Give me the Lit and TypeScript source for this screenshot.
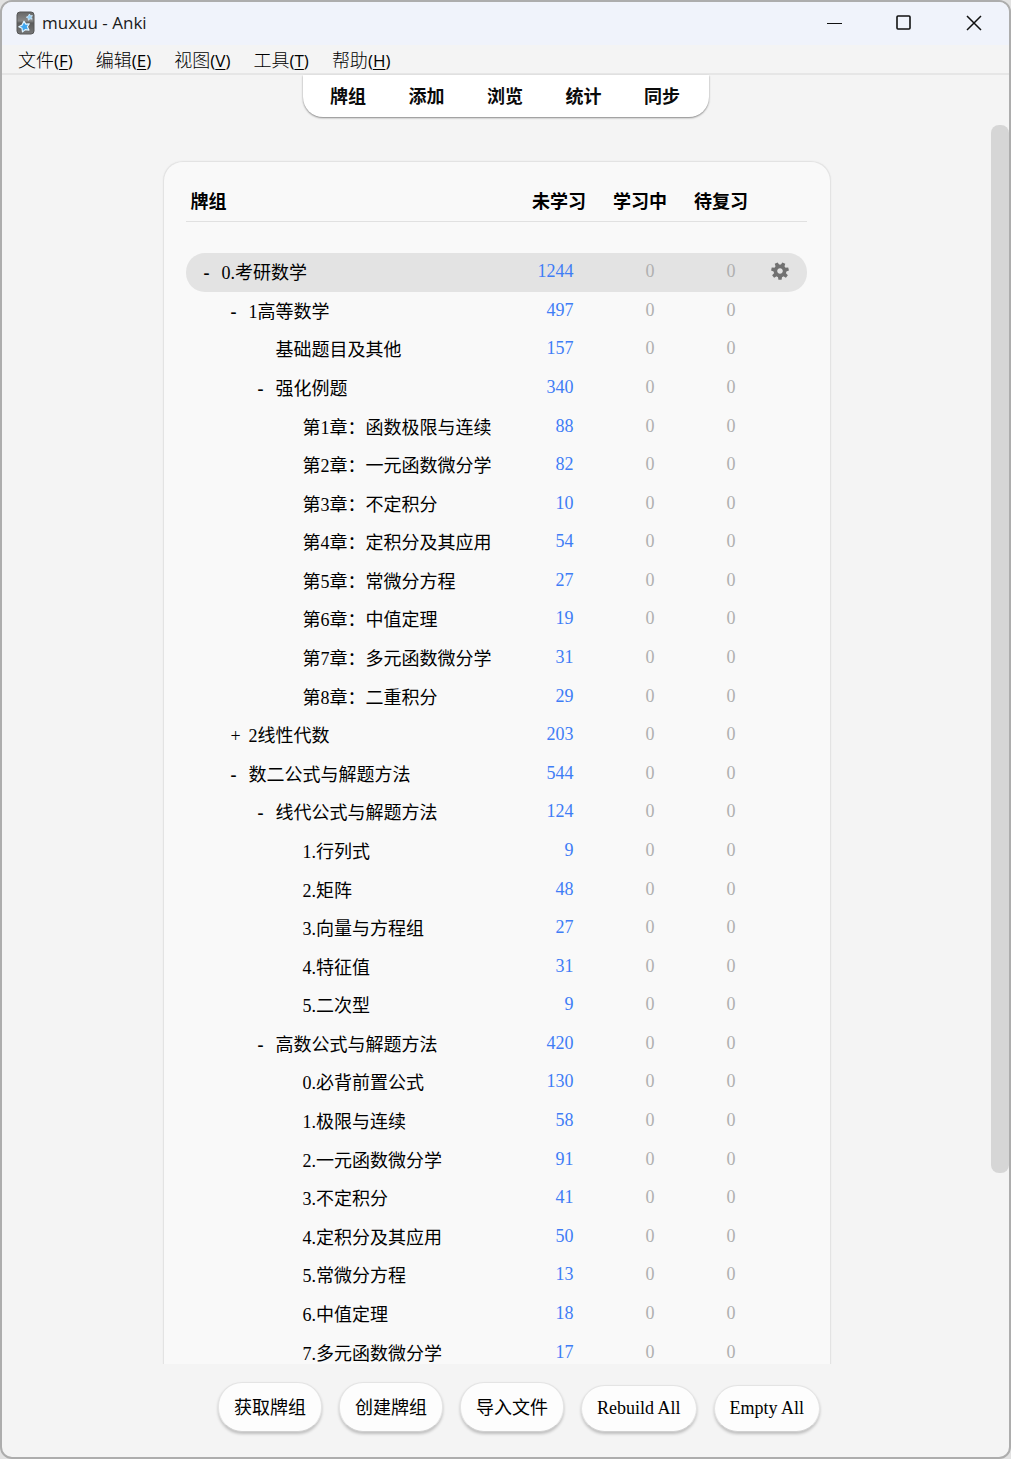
import { LitElement, html, svg, css, nothing } from "lit";
import { customElement, property, state } from "lit/decorators.js";
import { classMap } from "lit/directives/class-map.js";

interface Deck {
  level: number;
  name: string;
  fresh: number;
  toggle?: "-" | "+";
}

const DECKS: Deck[] = [
  { level: 0, name: "0.考研数学", fresh: 1244, toggle: "-" },
  { level: 1, name: "1高等数学", fresh: 497, toggle: "-" },
  { level: 2, name: "基础题目及其他", fresh: 157 },
  { level: 2, name: "强化例题", fresh: 340, toggle: "-" },
  { level: 3, name: "第1章：函数极限与连续", fresh: 88 },
  { level: 3, name: "第2章：一元函数微分学", fresh: 82 },
  { level: 3, name: "第3章：不定积分", fresh: 10 },
  { level: 3, name: "第4章：定积分及其应用", fresh: 54 },
  { level: 3, name: "第5章：常微分方程", fresh: 27 },
  { level: 3, name: "第6章：中值定理", fresh: 19 },
  { level: 3, name: "第7章：多元函数微分学", fresh: 31 },
  { level: 3, name: "第8章：二重积分", fresh: 29 },
  { level: 1, name: "2线性代数", fresh: 203, toggle: "+" },
  { level: 1, name: "数二公式与解题方法", fresh: 544, toggle: "-" },
  { level: 2, name: "线代公式与解题方法", fresh: 124, toggle: "-" },
  { level: 3, name: "1.行列式", fresh: 9 },
  { level: 3, name: "2.矩阵", fresh: 48 },
  { level: 3, name: "3.向量与方程组", fresh: 27 },
  { level: 3, name: "4.特征值", fresh: 31 },
  { level: 3, name: "5.二次型", fresh: 9 },
  { level: 2, name: "高数公式与解题方法", fresh: 420, toggle: "-" },
  { level: 3, name: "0.必背前置公式", fresh: 130 },
  { level: 3, name: "1.极限与连续", fresh: 58 },
  { level: 3, name: "2.一元函数微分学", fresh: 91 },
  { level: 3, name: "3.不定积分", fresh: 41 },
  { level: 3, name: "4.定积分及其应用", fresh: 50 },
  { level: 3, name: "5.常微分方程", fresh: 13 },
  { level: 3, name: "6.中值定理", fresh: 18 },
  { level: 3, name: "7.多元函数微分学", fresh: 17 },
];

const TEETH = [0, 1, 2, 3, 4, 5, 6];

@customElement("title-bar")
class TitleBar extends LitElement {
  static styles = css`
    :host {
      display: flex;
      align-items: center;
      height: 41px;
      padding-bottom: 2px;
      background: #f0f3fb;
      font: 17px/24px "Open Sans", "Noto Sans", sans-serif;
      color: #1a1a1a;
    }
    .logo {
      margin-left: 14px;
      margin-right: 7px;
      flex: none;
    }
    .title {
      flex: 1;
    }
    button {
      width: 70px;
      height: 41px;
      padding: 0;
      border: 0;
      background: none;
      display: grid;
      place-items: center;
    }
    button svg {
      fill: none;
      stroke: #111;
    }
  `;
  render() {
    return html`
      <svg class="logo" width="19" height="24" viewBox="0 0 19 24" aria-hidden="true">
        <defs>
          <linearGradient id="g" x1="0" y1="0" x2="0" y2="1">
            <stop offset="0" stop-color="#666" />
            <stop offset="0.4" stop-color="#888" />
            <stop offset="0.5" stop-color="#5c5c5c" />
            <stop offset="1" stop-color="#777" />
          </linearGradient>
        </defs>
        <rect x="1" y="1" width="17" height="22" rx="3" fill="url(#g)" stroke="#565656" />
        <path
          d="M8 10.2l1.8 2.9 3.5-.3-1.9 3 1.5 3.3-3.6-.5-2.8 2.3-.5-3.6-3.2-1.6 3.3-1.6z"
          fill="#3fa6f0" stroke="#e2f4ff" stroke-width="1.2" stroke-linejoin="round" />
        <path
          d="M13.4 3l1 1.7 2-.1-1.2 1.7.9 1.9-2.1-.4-1.6 1.4-.2-2.1-1.9-.9 2-.9z"
          fill="#8fd0fb" stroke="#d4eeff" stroke-width=".8" stroke-linejoin="round" />
      </svg>
      <span class="title">muxuu - Anki</span>
      <button aria-label="最小化">
        <svg width="16" height="16"><path d="M1 8.5h15" /></svg>
      </button>
      <button aria-label="最大化">
        <svg width="16" height="16"><rect x="1" y="1" width="13" height="13" rx="1" stroke-width="1.6" /></svg>
      </button>
      <button aria-label="关闭">
        <svg width="16" height="16"><path d="M1 1l14 14M15 1L1 15" stroke-width="1.5" /></svg>
      </button>
    `;
  }
}

@customElement("menu-bar")
class MenuBar extends LitElement {
  static styles = css`
    :host {
      display: flex;
      gap: 23px;
      height: 28px;
      padding: 0 16px;
      border-bottom: 2px solid #e6e6e6;
      font: 300 18px/30px "Open Sans", "Noto Sans CJK SC", sans-serif;
    }
    button {
      padding: 0;
      border: 0;
      background: none;
      font: inherit;
      color: #000;
      white-space: nowrap;
    }
    .latin {
      font-size: 17px;
      font-weight: 400;
    }
    u {
      text-underline-offset: 2px;
    }
  `;
  render() {
    return [
      ["文件", "F"],
      ["编辑", "E"],
      ["视图", "V"],
      ["工具", "T"],
      ["帮助", "H"],
    ].map(
      ([label, key]) =>
        html`<button>${label}<span class="latin">(<u>${key}</u>)</span></button>`
    );
  }
}

@customElement("top-nav")
class TopNav extends LitElement {
  static styles = css`
    nav {
      box-sizing: border-box;
      min-width: 406px;
      display: flex;
      justify-content: space-between;
      padding: 2px 29px 0 27px;
      border-radius: 0 0 20px 20px;
      background: #fff;
      box-shadow: 0 1px 2px rgba(0, 0, 0, 0.45);
      font: 700 18px/40px "Liberation Serif", "Noto Sans CJK SC", sans-serif;
    }
    a {
      color: #0a0a0a;
      text-decoration: none;
    }
  `;
  render() {
    return html`<nav>
      ${["牌组", "添加", "浏览", "统计", "同步"].map((t) => html`<a href="#">${t}</a>`)}
    </nav>`;
  }
}

@customElement("deck-table")
class DeckTable extends LitElement {
  @property({ attribute: false }) decks: Deck[] = [];
  @state() private current = 0;

  static styles = css`
    :host {
      display: block;
      height: 100%;
    }
    table {
      width: 100%;
      height: 100%;
      border-spacing: 0;
      table-layout: fixed;
      font: 18px/22px "Liberation Serif", "Noto Sans CJK SC", serif;
    }
    .count {
      width: 81px;
    }
    .options {
      width: 45px;
    }
    th,
    td {
      padding: 0;
    }
    thead tr {
      height: 38px;
    }
    th {
      padding-bottom: 2px;
      border-bottom: 1px solid #e1e1e1;
      font-weight: 700;
      text-align: center;
    }
    th.name {
      padding-left: 5px;
      text-align: left;
    }
    .spacer {
      height: 31px;
    }
    .line {
      display: flex;
      padding-left: 18px;
      padding-top: 2px;
      font-weight: 400;
    }
    .indent {
      flex: none;
    }
    .toggle {
      flex: none;
      width: 18px;
      padding: 0;
      border: 0;
      background: none;
      font: inherit;
      color: #000;
      text-align: left;
    }
    .collapse {
      font-weight: 700;
    }
    a {
      color: #000;
      text-decoration: none;
      white-space: nowrap;
    }
    .num {
      padding-right: 26px;
      padding-bottom: 2px;
      text-align: right;
      color: #b0b0b0;
    }
    .new {
      color: #3f7df6;
    }
    .current td {
      background: #e3e3e3;
    }
    .current td:first-child {
      border-radius: 19px 0 0 19px;
    }
    .current td:last-child {
      border-radius: 0 19px 19px 0;
    }
    .gear {
      display: block;
      margin-left: 9px;
      margin-bottom: 2px;
      padding: 0;
      border: 0;
      background: none;
      color: #717171;
      line-height: 0;
    }
  `;

  private gear() {
    return html`<button class="gear" aria-label="选项">
      <svg width="18" height="18" viewBox="-9 -9 18 18" fill="currentColor">
        <circle r="4.6" fill="none" stroke="currentColor" stroke-width="3.6" />
        ${TEETH.map(
          (i) => svg`<path d="M-2.1 5.4L-1.6 8.8H1.6L2.1 5.4z" transform="rotate(${(i * 360) / TEETH.length})" />`
        )}
      </svg>
    </button>`;
  }

  render() {
    return html`<table>
      <colgroup>
        <col />
        <col class="count" />
        <col class="count" />
        <col class="count" />
        <col class="options" />
      </colgroup>
      <thead>
        <tr>
          <th class="name">牌组</th>
          <th>未学习</th>
          <th>学习中</th>
          <th>待复习</th>
          <th></th>
        </tr>
      </thead>
      <tbody>
        <tr class="spacer"><td colspan="5"></td></tr>
        ${this.decks.map(
          (d, i) => html`<tr class=${classMap({ current: i === this.current })}>
            <td>
              <div class="line">
                <span class="indent" style="width:${d.level * 27}px"></span>
                ${d.toggle
                  ? html`<button class="toggle ${d.toggle === "-" ? "collapse" : ""}">${d.toggle}</button>`
                  : html`<span class="toggle"></span>`}
                <a href="#">${d.name}</a>
              </div>
            </td>
            <td class="num new">${d.fresh}</td>
            <td class="num">0</td>
            <td class="num">0</td>
            <td>${i === this.current ? this.gear() : nothing}</td>
          </tr>`
        )}
      </tbody>
    </table>`;
  }
}

@customElement("bottom-bar")
class BottomBar extends LitElement {
  static styles = css`
    :host {
      display: flex;
      justify-content: center;
      align-items: flex-end;
      gap: 17px;
      padding: 18px 0 25px 27px;
    }
    button {
      padding: 12px 15px 10px;
      border: 1px solid #e4e4e4;
      border-bottom-color: #d0d0d0;
      border-radius: 24px;
      background: #fdfdfd;
      box-shadow: 0 2px 3px rgba(0, 0, 0, 0.22);
      font: 400 18px/26px "Liberation Serif", "Noto Sans CJK SC", serif;
      color: #000;
      white-space: nowrap;
    }
    .latin {
      padding: 10px 15px 11px;
      line-height: 24px;
    }
  `;
  render() {
    return html`
      <button>获取牌组</button>
      <button>创建牌组</button>
      <button>导入文件</button>
      <button class="latin">Rebuild All</button>
      <button class="latin">Empty All</button>
    `;
  }
}

@customElement("app-root")
class AppRoot extends LitElement {
  static styles = css`
    :host {
      display: block;
      background: #e2e2e2;
    }
    .window {
      box-sizing: border-box;
      height: 100vh;
      display: flex;
      flex-direction: column;
      border: 2px solid #adadad;
      border-radius: 12px;
      background: #f4f4f4;
      overflow: hidden;
    }
    .top {
      display: flex;
      justify-content: center;
      height: 50px;
      padding-left: 1px;
    }
    .view {
      flex: 1;
      min-height: 0;
      display: flex;
      overflow: hidden;
    }
    .content {
      flex: 1;
      display: flex;
      flex-direction: column;
      align-items: center;
      padding-top: 36px;
    }
    .card {
      box-sizing: border-box;
      flex: 1;
      width: 68%;
      min-width: 560px;
      max-width: 668px;
      margin-bottom: -8px;
      padding: 22px 23px 0 22px;
      border: 1px solid #e3e3e3;
      border-bottom: 0;
      border-radius: 20px 20px 0 0;
      background: #f9f9f9;
      box-shadow: 0 0 2px rgba(0, 0, 0, 0.06);
      display: grid;
    }
    .track {
      width: 18px;
    }
    .thumb {
      height: 84.6%;
      border-radius: 8px;
      background: #d6d6d6;
    }
  `;
  render() {
    return html`<div class="window">
      <title-bar></title-bar>
      <menu-bar></menu-bar>
      <div class="top"><top-nav></top-nav></div>
      <div class="view">
        <div class="content">
          <main class="card"><deck-table .decks=${DECKS}></deck-table></main>
        </div>
        <div class="track"><div class="thumb"></div></div>
      </div>
      <bottom-bar></bottom-bar>
    </div>`;
  }
}
